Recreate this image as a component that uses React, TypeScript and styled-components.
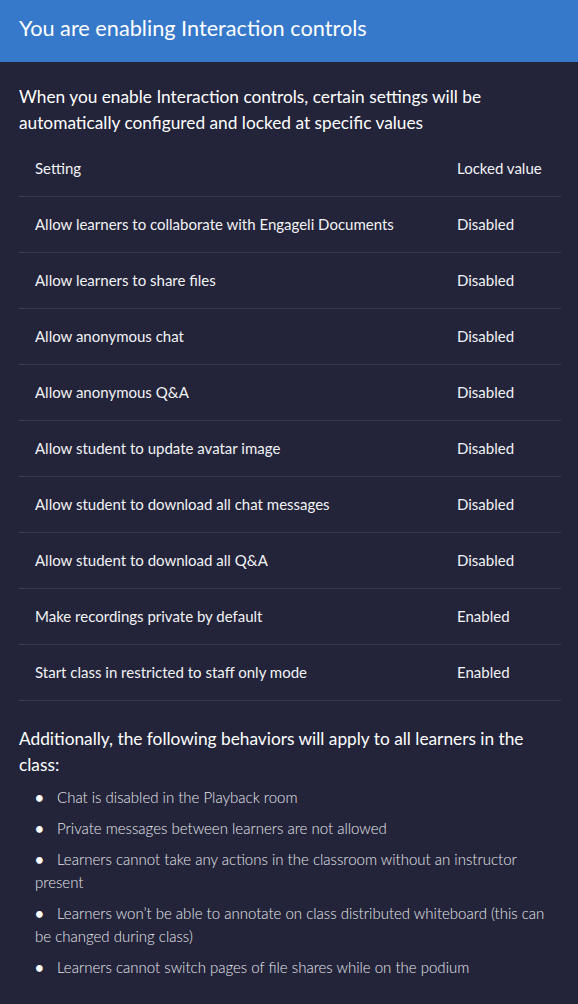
import styled, { createGlobalStyle } from 'styled-components';

const GlobalStyle = createGlobalStyle`
  html, body {
    margin: 0;
    padding: 0;
    background: #23243a;
  }
  * {
    box-sizing: border-box;
  }
`;

const settings: Array<[string, string]> = [
  ['Allow learners to collaborate with Engageli Documents', 'Disabled'],
  ['Allow learners to share files', 'Disabled'],
  ['Allow anonymous chat', 'Disabled'],
  ['Allow anonymous Q&A', 'Disabled'],
  ['Allow student to update avatar image', 'Disabled'],
  ['Allow student to download all chat messages', 'Disabled'],
  ['Allow student to download all Q&A', 'Disabled'],
  ['Make recordings private by default', 'Enabled'],
  ['Start class in restricted to staff only mode', 'Enabled'],
];

const behaviors = [
  'Chat is disabled in the Playback room',
  'Private messages between learners are not allowed',
  'Learners cannot take any actions in the classroom without an instructor present',
  'Learners won’t be able to annotate on class distributed whiteboard (this can be changed during class)',
  'Learners cannot switch pages of file shares while on the podium',
];

const App = () => {
  return (
    <>
      <GlobalStyle />
      <StyledModal>
        <StyledHeader>
          <StyledTitle>You are enabling Interaction controls</StyledTitle>
        </StyledHeader>
        <StyledBody>
          <StyledIntro>
            When you enable Interaction controls, certain settings will be
            automatically configured and locked at specific values
          </StyledIntro>
          <StyledTable>
            <thead>
              <tr>
                <StyledCell as="th">Setting</StyledCell>
                <StyledValueCell as="th">Locked value</StyledValueCell>
              </tr>
            </thead>
            <tbody>
              {settings.map(([name, value]) => (
                <tr key={name}>
                  <StyledCell>{name}</StyledCell>
                  <StyledValueCell>{value}</StyledValueCell>
                </tr>
              ))}
            </tbody>
          </StyledTable>
          <StyledIntro>
            Additionally, the following behaviors will apply to all learners in
            the class:
          </StyledIntro>
          <StyledList>
            {behaviors.map((text) => (
              <StyledItem key={text}>{text}</StyledItem>
            ))}
          </StyledList>
        </StyledBody>
      </StyledModal>
    </>
  );
};

const StyledModal = styled.div`
  width: 578px;
  min-height: 1004px;
  background: #23243a;
  color: #ffffff;
  font-family: 'Source Sans Pro', 'Lato', 'Liberation Sans', sans-serif;
`;

const StyledHeader = styled.div`
  height: 62px;
  background: #3678ca;
  display: flex;
  align-items: center;
  padding: 0 19px 7px;
`;

const StyledTitle = styled.h1`
  margin: 0;
  font-size: 21.7px;
  font-weight: 400;
  color: #ffffff;
`;

const StyledBody = styled.div`
  padding: 22px 17px 0 19px;
`;

const StyledIntro = styled.p`
  margin: 0;
  font-size: 17.3px;
  line-height: 26px;
  color: #ffffff;
`;

const StyledTable = styled.table`
  width: 100%;
  border-collapse: collapse;
  margin: 4px 0 25px;
`;

const StyledCell = styled.td`
  height: 56px;
  padding: 0 16px;
  text-align: left;
  font-size: 15px;
  font-weight: 400;
  color: #f2f2f5;
  border-bottom: 1px solid #383a50;
  vertical-align: middle;
`;

const StyledValueCell = styled(StyledCell)`
  width: 120px;
  padding-left: 16px;
`;

const StyledList = styled.ul`
  margin: 8px 0 0;
  padding: 0 0 0 16px;
  list-style: none;
  font-family: 'Lato', 'Liberation Sans', sans-serif;
  font-size: 15px;
  line-height: 23px;
  color: #e6e6ea;
  font-weight: 300;
`;

const StyledItem = styled.li`
  margin-bottom: 8px;

  &::before {
    content: '•';
    display: inline-block;
    width: 22px;
    color: #ffffff;
    font-weight: 700;
  }
`;

export default App;
